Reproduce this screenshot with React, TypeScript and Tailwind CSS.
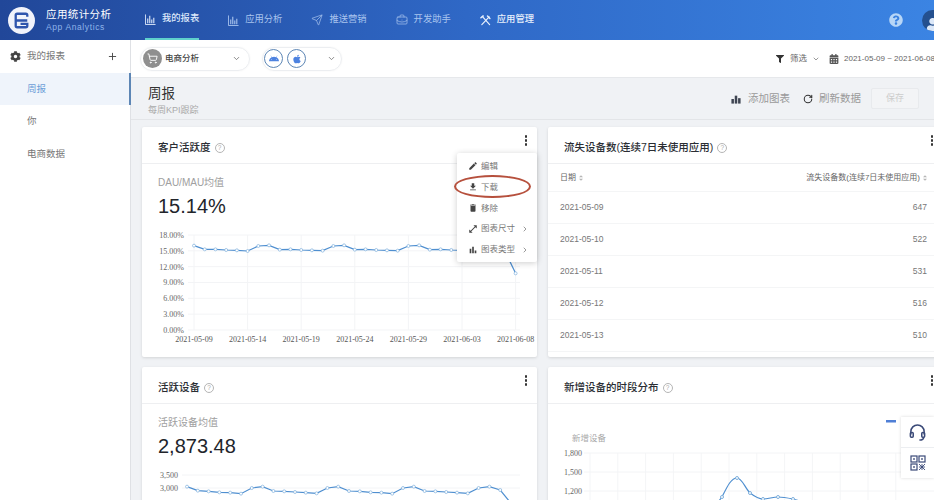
import React from 'react';
import { Plus, ChevronDown, ChevronRight, Send, BriefcaseBusiness, ShoppingCart, RotateCw } from 'lucide-react';
import { FaCog, FaFilter, FaCalendarAlt, FaQuestionCircle, FaAndroid, FaApple, FaUser } from 'react-icons/fa';
import { MdEdit, MdFileDownload, MdDelete, MdOpenInFull, MdBarChart } from 'react-icons/md';

const SERIF = "'Liberation Serif', 'Noto Sans CJK SC', serif";

const navItems = ['我的报表', '应用分析', '推送营销', '开发助手', '应用管理'];
const dates = ['2021-05-09', '2021-05-14', '2021-05-19', '2021-05-24', '2021-05-29', '2021-06-03', '2021-06-08'];
const tableRows = [
  ['2021-05-09', '647'],
  ['2021-05-10', '522'],
  ['2021-05-11', '531'],
  ['2021-05-12', '516'],
  ['2021-05-13', '510'],
];

const BarsIcon = ({ className }: { className?: string }) => (
  <svg viewBox="0 0 12 12" className={className} fill="none" stroke="currentColor" strokeWidth="1">
    <path d="M0.5 0.5V11.5H11.5" />
    <path d="M3 10V5M5.2 10V2M7.4 10V6M9.6 10V4" strokeWidth="1.2" />
  </svg>
);

const ToolsIcon = ({ className }: { className?: string }) => (
  <svg viewBox="0 0 12 12" className={className} fill="none" stroke="currentColor" strokeWidth="1.3" strokeLinecap="round">
    <path d="M2.5 1.5L10.5 10.5" />
    <path d="M10 2L2 10.5" />
    <path d="M8.2 1.2L10.8 3.8" strokeWidth="1.6" />
    <path d="M1 3L3.5 1" strokeWidth="1.6" />
  </svg>
);

const AddChartIcon = ({ className }: { className?: string }) => (
  <svg viewBox="0 0 12 12" className={className} fill="currentColor">
    <rect x="0.5" y="6" width="3" height="5.5" />
    <rect x="4.5" y="2" width="3" height="9.5" />
    <rect x="8.5" y="5" width="3" height="6.5" />
  </svg>
);

const SortIcon = () => (
  <svg viewBox="0 0 6 8" className="w-[4px] h-[6px] shrink-0" fill="#b5b5b5">
    <path d="M3 0L6 3H0Z" />
    <path d="M3 8L0 5H6Z" />
  </svg>
);

const Help = () => (
  <span className="flex w-[10px] h-[10px] items-center justify-center rounded-full border border-[#b5b5b5] text-[6.5px] leading-none text-[#aaa]">?</span>
);

const Kebab = () => (
  <div className="absolute top-[8px] right-[10px] flex flex-col gap-[1.5px]">
    <span className="w-[2.5px] h-[2.5px] rounded-full bg-[#333]" />
    <span className="w-[2.5px] h-[2.5px] rounded-full bg-[#333]" />
    <span className="w-[2.5px] h-[2.5px] rounded-full bg-[#333]" />
  </div>
);

const Card = ({ title, children }: { title: string; children: React.ReactNode }) => (
  <div className="relative h-[230px] bg-white rounded-[2px] shadow-[0_1px_3px_rgba(0,0,0,0.12)]">
    <div className="flex items-center gap-[4px] h-[37px] pt-[6px] px-4 border-b border-[#eeeff1]">
      <span className="text-[10.5px] font-medium text-[#2a2d33]">{title}</span>
      <Help />
    </div>
    <Kebab />
    {children}
  </div>
);

const Stat = ({ label, value }: { label: string; value: string }) => (
  <div className="h-[64px] px-4 pt-[12px]">
    <div className="h-[14px] text-[10px] leading-[14px] text-[#a0a0a0]">{label}</div>
    <div className="pt-[3px] text-[20px] leading-[26px] text-[#22252b]">{value}</div>
  </div>
);

// 活跃度折线, y values read off the reference then moved to card-local
const rateY = [362, 373, 373, 375, 376, 378, 363, 361, 374, 373, 375, 376, 377, 363, 361, 374, 373, 375, 376, 377, 363, 361, 374, 373, 375, 376, 377, 363, 361, 378, 445];
const rateLine = rateY.map((y, i) => [52 + i * 10.72, y / 3 + 125 - 228]);

const RateChart = () => {
  const ticks = ['18.00%', '15.00%', '12.00%', '9.00%', '6.00%', '3.00%', '0.00%'];
  return (
    <svg width="395" height="128" className="block">
      {ticks.map((t, i) => (
        <g key={t}>
          <line x1="46" x2="378" y1={7 + i * 15.83} y2={7 + i * 15.83} stroke="#f3f4f6" />
          <text x="42" y={10 + i * 15.83} textAnchor="end" fontSize="8" fill="#666" fontFamily={SERIF}>{t}</text>
        </g>
      ))}
      {dates.map((d, i) => (
        <g key={d}>
          <line x1={52 + i * 53.6} x2={52 + i * 53.6} y1="7" y2="102" stroke="#f3f4f6" />
          <text x={52 + i * 53.6} y="114" textAnchor="middle" fontSize="8" fill="#555" fontFamily={SERIF}>{d}</text>
        </g>
      ))}
      <polyline points={rateLine.map(p => p.join(',')).join(' ')} fill="none" stroke="#4f8fd0" strokeWidth="1.2" />
      {rateLine.map((p, i) => (
        <circle key={i} cx={p[0]} cy={p[1]} r="1.5" fill="#fff" stroke="#7fb0dd" strokeWidth="0.7" />
      ))}
    </svg>
  );
};

const deviceY = [380, 392, 394, 397, 398, 401, 384, 380, 393, 394, 396, 398, 400, 384, 380, 393, 394, 397, 398, 401, 384, 380, 393, 394, 396, 398, 400, 384, 380, 390, 430];
const deviceLine = deviceY.map((y, i) => [45 + i * 10.8, y / 3 + 360 - 468]);

const DeviceChart = () => (
  <svg width="395" height="32" className="block">
    {['3,500', '3,000'].map((t, i) => (
      <g key={t}>
        <line x1="40" x2="378" y1={7 + i * 13} y2={7 + i * 13} stroke="#f3f4f6" />
        <text x="36" y={10 + i * 13} textAnchor="end" fontSize="8" fill="#666" fontFamily={SERIF}>{t}</text>
      </g>
    ))}
    <polyline points={deviceLine.map(p => p.join(',')).join(' ')} fill="none" stroke="#4f8fd0" strokeWidth="1.2" />
    {deviceLine.map((p, i) => (
      <circle key={i} cx={p[0]} cy={p[1]} r="1.5" fill="#fff" stroke="#7fb0dd" strokeWidth="0.7" />
    ))}
  </svg>
);

const hourPoints = [[174, 93], [189, 74], [202, 89], [215, 95], [230, 93], [245, 95], [258, 100]];

const HourChart = () => (
  <svg width="395" height="96" className="block">
    <rect x="338" y="16" width="10" height="2.5" fill="#4f7fd6" />
    <text x="24" y="37" fontSize="8.5" fill="#aaa">新增设备</text>
    {[0, 1, 2, 3, 4, 5, 6, 7, 8, 9, 10, 11].map(i => (
      <line key={i} x1={42 + i * 27.8} x2={42 + i * 27.8} y1="49" y2="96" stroke="#f4f5f7" />
    ))}
    {['1,800', '1,500', '1,200'].map((t, i) => (
      <g key={t}>
        <line x1="36" x2="395" y1={49 + i * 19} y2={49 + i * 19} stroke="#f3f4f6" />
        <text x="34" y={52 + i * 19} textAnchor="end" fontSize="8" fill="#666" fontFamily={SERIF}>{t}</text>
      </g>
    ))}
    <path d="M160 112C165 105 170 98 174 93C179 83 183 74 189 74C194 74 197 84 202 89C206 92 210 95 215 95C220 95 225 93 230 93C235 93 240 94 245 95C250 96 254 98 258 100" fill="none" stroke="#4f8fd0" strokeWidth="1.2" />
    {hourPoints.map(p => (
      <circle key={p[0]} cx={p[0]} cy={p[1]} r="1.5" fill="#fff" stroke="#7fb0dd" />
    ))}
  </svg>
);

const menu = [
  { label: '编辑', icon: <MdEdit /> },
  { label: '下载', icon: <MdFileDownload /> },
  { label: '移除', icon: <MdDelete /> },
  { label: '图表尺寸', icon: <MdOpenInFull />, more: true },
  { label: '图表类型', icon: <MdBarChart />, more: true },
];

const CardMenu = () => (
  <div className="absolute top-[26px] right-0 w-[80px] h-[109px] py-[3px] bg-white rounded-[2px] shadow-[0_1px_6px_rgba(0,0,0,0.2)]">
    {menu.map(m => (
      <div key={m.label} className="flex items-center h-[20.8px] pl-[11px] text-[8.5px] text-[#777]">
        <span className="w-[13px] text-[10px] text-[#444]">{m.icon}</span>
        <span>{m.label}</span>
        {m.more && <ChevronRight className="w-[8px] h-[8px] ml-[6px] text-[#666]" />}
      </div>
    ))}
    <div className="absolute left-[-3px] top-[22px] w-[77px] h-[23px] rounded-[50%] border-2 border-[#b6503d]" />
  </div>
);

const Logo = () => (
  <svg viewBox="0 0 28 28" className="w-[27px] h-[27px] shrink-0">
    <circle cx="14" cy="14" r="14" fill="#f1f3fb" />
    <path d="M20 10V8.5A1.5 1.5 0 0 0 18.5 7H9.5A1.5 1.5 0 0 0 8 8.5V14H20M8 14V19.5A1.5 1.5 0 0 0 9.5 21H18.5A1.5 1.5 0 0 0 20 19.5V17.5H13" fill="none" stroke="#2f55ad" strokeWidth="2.4" />
  </svg>
);

const QrIcon = () => (
  <svg viewBox="0 0 16 16" className="w-[16px] h-[16px]" fill="none" stroke="#3b4a78" strokeWidth="1.2">
    <rect x="1" y="1" width="6" height="6" />
    <rect x="9" y="1" width="6" height="6" />
    <rect x="1" y="9" width="6" height="6" />
    <rect x="3.2" y="3.2" width="1.6" height="1.6" fill="#3b4a78" stroke="none" />
    <rect x="11.2" y="3.2" width="1.6" height="1.6" fill="#3b4a78" stroke="none" />
    <rect x="3.2" y="11.2" width="1.6" height="1.6" fill="#3b4a78" stroke="none" />
    <path d="M9 9L15 15M15 9L9 15M12 9V15M9 12H15" strokeWidth="0.9" />
  </svg>
);

export default function App() {
  return (
    <div className="w-[934px] h-[500px] overflow-hidden relative bg-[#f0f2f5] font-['Liberation_Sans','Noto_Sans_CJK_SC',sans-serif]">
      <header className="flex items-center h-[40px] bg-gradient-to-r from-[#214799] via-[#2f68c6] to-[#3b84e3] text-white">
        <div className="flex items-center w-[145px] pl-[8px] gap-[11px] shrink-0">
          <Logo />
          <div>
            <div className="text-[10.5px] leading-[14px] tracking-[0.4px]">应用统计分析</div>
            <div className="text-[8.5px] leading-[12px] tracking-[0.6px] text-[#8fb4ea]">App Analytics</div>
          </div>
        </div>
        <nav className="flex h-full gap-[29px]">
          {navItems.map((n, i) => (
            <div
              key={n}
              className={
                i === 0
                  ? 'flex items-center gap-[6px] h-full text-[9.3px] font-medium border-b-[2px] border-[#5fd0cc] text-[#dfeafb]'
                  : i === 4
                    ? 'flex items-center gap-[6px] h-full text-[9.3px] font-medium text-[#e8f0fc]'
                    : 'flex items-center gap-[6px] h-full text-[9.3px] text-[#a9c4ee]'
              }
            >
              {i < 2 && <BarsIcon className="w-[11px] h-[11px]" />}
              {i === 2 && <Send className="w-[12px] h-[12px]" strokeWidth={1.4} />}
              {i === 3 && <BriefcaseBusiness className="w-[12px] h-[12px]" strokeWidth={1.4} />}
              {i === 4 && <ToolsIcon className="w-[11px] h-[11px]" />}
              <span>{n}</span>
            </div>
          ))}
        </nav>
        <FaQuestionCircle className="ml-auto w-[14px] h-[14px] text-[#b7d6f7]" />
        <div className="flex items-end justify-center w-[21px] h-[21px] ml-[19px] mr-[-9px] shrink-0 overflow-hidden rounded-full bg-[#24508f]">
          <FaUser className="w-[13px] h-[13px] text-[#dce8f8]" />
        </div>
      </header>

      <div className="flex h-[460px]">
        <aside className="w-[131px] shrink-0 bg-white border-r border-[#dfe1e5] text-[9.5px] text-[#777]">
          <div className="flex items-center h-[33px] pl-[10px] pr-[12px]">
            <FaCog className="w-[11px] h-[11px] text-[#444]" />
            <span className="ml-[6px]">我的报表</span>
            <Plus className="ml-auto w-[11px] h-[11px] text-[#444]" />
          </div>
          <div className="flex items-center h-[32px] -mr-px pl-[27px] bg-[#eff4fb] text-[#6d9ed8] border-r-2 border-[#5d86b5]">周报</div>
          <div className="flex items-center h-[33px] pl-[27px]">你</div>
          <div className="flex items-center h-[33px] pl-[27px]">电商数据</div>
        </aside>

        <main className="w-[803px] shrink-0">
          <div className="flex items-center h-[38px] pl-[9px] bg-white border-b border-[#e6e8eb]">
            <div className="flex items-center w-[110px] h-[24px] pl-[2px] pr-[8px] rounded-full border border-[#eceef1] shadow-[0_0_2px_rgba(0,0,0,0.05)]">
              <span className="flex items-center justify-center w-[19px] h-[19px] rounded-full bg-[#8f8f8f]">
                <ShoppingCart className="w-[11px] h-[11px] text-white" />
              </span>
              <span className="ml-[3px] text-[8.5px] font-medium text-[#444]">电商分析</span>
              <ChevronDown className="ml-auto w-[9px] h-[9px] text-[#666]" />
            </div>
            <div className="flex items-center w-[80px] h-[24px] ml-[12px] pl-[1px] pr-[5px] gap-[4px] rounded-full border border-[#eceef1] shadow-[0_0_2px_rgba(0,0,0,0.05)]">
              <span className="flex items-center justify-center w-[19px] h-[19px] shrink-0 rounded-full border border-[#5d86b5]">
                <FaAndroid className="w-[10px] h-[10px] text-[#4d82e0]" />
              </span>
              <span className="flex items-center justify-center w-[19px] h-[19px] shrink-0 rounded-full border border-[#5d86b5]">
                <FaApple className="w-[10px] h-[10px] text-[#4d82e0]" />
              </span>
              <ChevronDown className="ml-auto w-[9px] h-[9px] text-[#666]" />
            </div>
            <div className="flex items-center w-[158px] ml-auto shrink-0 whitespace-nowrap text-[8.5px] text-[#666]">
              <FaFilter className="w-[8px] h-[8px] shrink-0 text-[#333]" />
              <span className="ml-[6px]">筛选</span>
              <ChevronDown className="ml-[5px] w-[8px] h-[8px] shrink-0" />
              <FaCalendarAlt className="ml-[9px] w-[10px] h-[10px] shrink-0 text-[#555]" />
              <span className="ml-[5px] text-[8px]">2021-05-09 ~ 2021-06-08</span>
            </div>
          </div>

          <div className="flex items-center h-[42px] pl-[17px] pr-[15px] border-b border-[#e3e5e8]">
            <div className="pt-[3px]">
              <div className="text-[13.5px] leading-[19px] text-[#333]">周报</div>
              <div className="mt-[1px] text-[9px] leading-[13px] text-[#aaa]">每周KPI跟踪</div>
            </div>
            <div className="flex items-center ml-auto text-[10.5px] text-[#9a9a9a]">
              <AddChartIcon className="w-[10px] h-[10px] text-[#3f4552]" />
              <span className="ml-[7px]">添加图表</span>
              <RotateCw className="ml-[13px] w-[10px] h-[10px] text-[#333]" strokeWidth={2.5} />
              <span className="ml-[6px]">刷新数据</span>
              <button className="w-[48px] h-[21px] ml-[10px] rounded-[2px] border border-[#e8eaed] bg-[#f3f4f6] text-[9px] text-[#ccc]">保存</button>
            </div>
          </div>

          <div className="grid grid-cols-[395px_395px] gap-x-[11px] gap-y-[10px] pt-[7px] pl-[11px]">
            <Card title="客户活跃度">
              <Stat label="DAU/MAU均值" value="15.14%" />
              <RateChart />
              <CardMenu />
            </Card>
            <Card title="流失设备数(连续7日未使用应用)">
              <div className="flex items-center justify-between h-[28px] pl-[12px] pr-[16px] border-b border-[#f4f5f6] text-[8px] text-[#666]">
                <span className="flex items-center gap-[3px]">日期 <SortIcon /></span>
                <span className="flex items-center gap-[3px]">流失设备数(连续7日未使用应用) <SortIcon /></span>
              </div>
              {tableRows.map(r => (
                <div key={r[0]} className="flex items-center justify-between h-[32px] pl-[12px] pr-[16px] border-b border-[#f4f5f6] text-[8.5px] text-[#777]">
                  <span>{r[0]}</span>
                  <span>{r[1]}</span>
                </div>
              ))}
            </Card>
            <Card title="活跃设备">
              <Stat label="活跃设备均值" value="2,873.48" />
              <DeviceChart />
            </Card>
            <Card title="新增设备的时段分布">
              <HourChart />
            </Card>
          </div>
        </main>
      </div>

      <div className="absolute top-[417px] right-0 w-[33px] h-[61px] bg-white shadow-[0_0_3px_rgba(0,0,0,0.15)]">
        <div className="flex items-center justify-center h-[31px] border-b border-[#eceef1]">
          <svg viewBox="0 0 20 20" className="w-[19px] h-[19px]" fill="none" stroke="#3b4a78" strokeWidth="1.6">
            <path d="M3 12V9a7 7 0 0 1 14 0v3" />
            <rect x="2.5" y="10" width="3" height="5" rx="1" />
            <rect x="14.5" y="10" width="3" height="5" rx="1" />
            <path d="M16.5 15c0 2-2 3-4.5 3" />
          </svg>
        </div>
        <div className="flex items-center justify-center h-[30px]">
          <QrIcon />
        </div>
      </div>
    </div>
  );
}
